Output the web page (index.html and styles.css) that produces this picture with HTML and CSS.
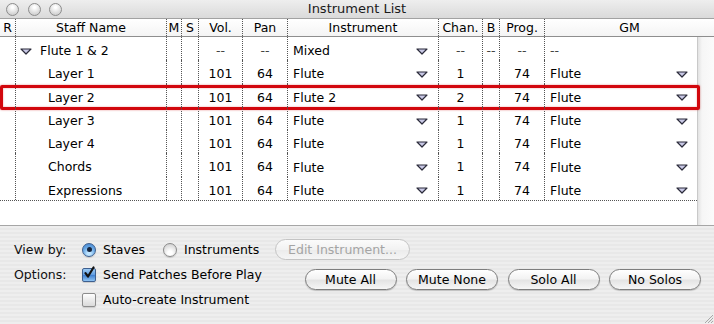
FILE: index.html
```html
<!DOCTYPE html>
<html lang="en">
<head>
    <meta charset="UTF-8">
    <meta name="viewport" content="width=device-width, initial-scale=1.0">
    <title>Instrument List</title>
    <link rel="stylesheet" href="styles.css">
</head>
<body>
<div class="window">
    <div class="titlebar">
        <div class="lights"><span class="light"></span><span class="light"></span><span class="light"></span></div>
        <div class="title">Instrument List</div>
        <div></div>
    </div>

    <div class="head">
        <div class="hc">R</div>
        <div class="hc">Staff Name</div>
        <div class="hc">M</div>
        <div class="hc">S</div>
        <div class="hc">Vol.</div>
        <div class="hc">Pan</div>
        <div class="hc">Instrument</div>
        <div class="hc">Chan.</div>
        <div class="hc">B</div>
        <div class="hc">Prog.</div>
        <div class="hc last">GM</div>
    </div>

    <div class="list">
        <div class="rows">
            <div class="row">
                <div class="c"></div>
                <div class="c name group"><svg class="tri" width="12" height="7" viewBox="0 0 12 7"><polygon points="1,1 11,1 6,6"/></svg>Flute 1 &amp; 2</div>
                <div class="c"></div><div class="c"></div>
                <div class="c num dash">--</div>
                <div class="c num dash">--</div>
                <div class="c pop"><span>Mixed</span><svg class="tri" width="12" height="7" viewBox="0 0 12 7"><polygon points="1,1 11,1 6,6"/></svg></div>
                <div class="c num dash">--</div>
                <div class="c num dash">--</div>
                <div class="c num dash">--</div>
                <div class="c gm dash">--</div>
            </div>
            <div class="row">
                <div class="c"></div>
                <div class="c name">Layer 1</div>
                <div class="c"></div><div class="c"></div>
                <div class="c num">101</div>
                <div class="c num">64</div>
                <div class="c pop"><span>Flute</span><svg class="tri" width="12" height="7" viewBox="0 0 12 7"><polygon points="1,1 11,1 6,6"/></svg></div>
                <div class="c num">1</div>
                <div class="c num"></div>
                <div class="c num">74</div>
                <div class="c gm pop"><span>Flute</span><svg class="tri" width="12" height="7" viewBox="0 0 12 7"><polygon points="1,1 11,1 6,6"/></svg></div>
            </div>
            <div class="row marked">
                <div class="c"></div>
                <div class="c name">Layer 2</div>
                <div class="c"></div><div class="c"></div>
                <div class="c num">101</div>
                <div class="c num">64</div>
                <div class="c pop"><span>Flute 2</span><svg class="tri" width="12" height="7" viewBox="0 0 12 7"><polygon points="1,1 11,1 6,6"/></svg></div>
                <div class="c num">2</div>
                <div class="c num"></div>
                <div class="c num">74</div>
                <div class="c gm pop"><span>Flute</span><svg class="tri" width="12" height="7" viewBox="0 0 12 7"><polygon points="1,1 11,1 6,6"/></svg></div>
            </div>
            <div class="row">
                <div class="c"></div>
                <div class="c name">Layer 3</div>
                <div class="c"></div><div class="c"></div>
                <div class="c num">101</div>
                <div class="c num">64</div>
                <div class="c pop"><span>Flute</span><svg class="tri" width="12" height="7" viewBox="0 0 12 7"><polygon points="1,1 11,1 6,6"/></svg></div>
                <div class="c num">1</div>
                <div class="c num"></div>
                <div class="c num">74</div>
                <div class="c gm pop"><span>Flute</span><svg class="tri" width="12" height="7" viewBox="0 0 12 7"><polygon points="1,1 11,1 6,6"/></svg></div>
            </div>
            <div class="row">
                <div class="c"></div>
                <div class="c name">Layer 4</div>
                <div class="c"></div><div class="c"></div>
                <div class="c num">101</div>
                <div class="c num">64</div>
                <div class="c pop"><span>Flute</span><svg class="tri" width="12" height="7" viewBox="0 0 12 7"><polygon points="1,1 11,1 6,6"/></svg></div>
                <div class="c num">1</div>
                <div class="c num"></div>
                <div class="c num">74</div>
                <div class="c gm pop"><span>Flute</span><svg class="tri" width="12" height="7" viewBox="0 0 12 7"><polygon points="1,1 11,1 6,6"/></svg></div>
            </div>
            <div class="row">
                <div class="c"></div>
                <div class="c name">Chords</div>
                <div class="c"></div><div class="c"></div>
                <div class="c num">101</div>
                <div class="c num">64</div>
                <div class="c pop"><span>Flute</span><svg class="tri" width="12" height="7" viewBox="0 0 12 7"><polygon points="1,1 11,1 6,6"/></svg></div>
                <div class="c num">1</div>
                <div class="c num"></div>
                <div class="c num">74</div>
                <div class="c gm pop"><span>Flute</span><svg class="tri" width="12" height="7" viewBox="0 0 12 7"><polygon points="1,1 11,1 6,6"/></svg></div>
            </div>
            <div class="row">
                <div class="c"></div>
                <div class="c name">Expressions</div>
                <div class="c"></div><div class="c"></div>
                <div class="c num">101</div>
                <div class="c num">64</div>
                <div class="c pop"><span>Flute</span><svg class="tri" width="12" height="7" viewBox="0 0 12 7"><polygon points="1,1 11,1 6,6"/></svg></div>
                <div class="c num">1</div>
                <div class="c num"></div>
                <div class="c num">74</div>
                <div class="c gm pop"><span>Flute</span><svg class="tri" width="12" height="7" viewBox="0 0 12 7"><polygon points="1,1 11,1 6,6"/></svg></div>
            </div>
        </div>
        <div class="scroll"></div>
    </div>

    <!-- options panel -->
    <div class="panel">
        <div class="line first">
            <div class="label">View by:</div>
            <div class="choice staves"><span class="radio on"></span>Staves</div>
            <div class="choice instr"><span class="radio"></span>Instruments</div>
            <div class="btn disabled edit">Edit Instrument...</div>
        </div>
        <div class="line second">
            <div class="opt">
                <div class="label">Options:</div>
                <div class="choice"><span class="check on"><svg width="14" height="14" viewBox="0 0 14 14"><path d="M3.5 7.2 L6 10.5 L11.5 1.5"/></svg></span>Send Patches Before Play</div>
            </div>
            <div class="btns">
                <div class="btn">Mute All</div>
                <div class="btn">Mute None</div>
                <div class="btn">Solo All</div>
                <div class="btn">No Solos</div>
            </div>
        </div>
        <div class="line third">
            <div class="choice"><span class="check"></span>Auto-create Instrument</div>
        </div>
        <svg class="grip" width="11" height="11" viewBox="0 0 11 11"><path d="M10 2 L2 10 M10 5 L5 10 M10 8 L8 10"/></svg>
    </div>
</div>
</body>
</html>
```

FILE: styles.css
```css
html, body{
    margin: 0;
    padding: 0;
}
body{
    width: 714px;
    height: 324px;
    overflow: hidden;
    font-family: "DejaVu Sans", "Liberation Sans", sans-serif;
    font-size: 12.5px;
    color: #000;
    background: #ececec;
}
.window{
    position: relative;
    width: 714px;
    height: 324px;
}

/* title bar */
.titlebar{
    display: grid;
    grid-template-columns: 1fr auto 1fr;
    align-items: center;
    height: 18px;
    border-bottom: 1px solid #a2a2a2;
    background: linear-gradient(#eeeeee, #dadada);
}
.lights{
    display: flex;
    gap: 8.5px;
    padding-left: 6px;
}
.light{
    width: 11px;
    height: 11px;
    border-radius: 50%;
    border: 1px solid #8c8c8c;
    background: radial-gradient(circle at 50% 30%, #ffffff 10%, #dcdcdc 60%, #c4c4c4);
}
.title{
    font-size: 13px;
    color: #1a1a1a;
    line-height: 18px;
}

/* header */
.head{
    display: grid;
    grid-template-columns: 16px 151px 15px 17px 44px 45px 151px 44px 17px 45px 169px;
    height: 18px;
    box-sizing: border-box;
    border-bottom: 1px solid #8e8e8e;
    background: linear-gradient(#ffffff, #f4f4f4);
}
.hc{
    text-align: center;
    line-height: 17px;
    border-right: 1px dotted #555;
}
.hc.last{
    border-right: none;
}

/* list body */
.list{
    display: flex;
    height: 189px;
    box-sizing: border-box;
    border-bottom: 1px solid #a6a6a6;
}
.rows{
    width: 697px;
    background: #fff;
}
.scroll{
    width: 17px;
    border-left: 1px solid #c9c9c9;
    background: linear-gradient(to right, #e2e2e2, #f6f6f6 4px, #fbfbfb);
}
.row{
    position: relative;
    display: grid;
    grid-template-columns: 16px 151px 15px 17px 44px 45px 151px 44px 17px 45px 152px;
    grid-template-rows: 23.3px;
    height: 23.3px;
}
.row:last-child{
    border-bottom: 1px dotted #555;
}
.c{
    box-sizing: border-box;
    border-right: 1px dotted #555;
    padding-top: 5px;
    line-height: 18px;
    white-space: nowrap;
}
.c.gm{
    border-right: none;
    padding-left: 5px;
}
.num{
    text-align: center;
}
.dash{
    color: #444;
}
.name{
    padding-left: 32px;
}
.name.group{
    display: flex;
    align-items: center;
    gap: 8px;
    padding-left: 4px;
}
.pop{
    display: flex;
    align-items: center;
    justify-content: space-between;
    padding-right: 10px;
    padding-left: 5px;
}
.c.gm.pop{
    padding-right: 9px;
}
.tri{
    flex: none;
}
.tri polygon{
    fill: #c9c9e6;
    stroke: #2b2b3a;
    stroke-width: 1.2;
    stroke-linejoin: round;
}
/* red annotation round the selected row */
.row.marked::after{
    content: '';
    position: absolute;
    left: 0;
    right: -3px;
    top: 1px;
    bottom: -3px;
    border: 3px solid #d2070d;
    border-radius: 2px;
    box-shadow: 0 0 2px rgba(210, 0, 0, 0.5), inset 0 0 2px rgba(210, 0, 0, 0.4);
    pointer-events: none;
}

/* options panel */
.panel{
    position: relative;
    height: 98px;
    box-sizing: border-box;
    padding: 13px 13px 0 14px;
    background: repeating-linear-gradient(#eeeeee 0px, #eeeeee 2px, #e8e8e8 2px, #e8e8e8 4px);
}
.line{
    display: flex;
}
.line.first{
    height: 21px;
    align-items: center;
}
.line.second{
    margin-top: 5px;
    align-items: flex-start;
}
.line.third{
    height: 19px;
    padding-left: 68px;
    align-items: center;
}
.opt{
    display: flex;
    align-items: center;
    height: 19px;
}
.label{
    width: 68px;
    color: #111;
}
.choice{
    display: flex;
    align-items: center;
    gap: 7px;
}
.choice.staves{
    width: 81px;
}
.choice.instr{
    width: 112px;
}
.radio{
    width: 12px;
    height: 12px;
    border-radius: 50%;
    border: 1px solid #8a8a8a;
    background: radial-gradient(circle at 50% 75%, #ffffff 20%, #e6e6e6 55%, #c8c8c8);
    box-shadow: 0 1px 1px rgba(0, 0, 0, 0.15);
}
.radio.on{
    position: relative;
    border-color: #3d5f8f;
    background: radial-gradient(circle at 50% 80%, #bfe4ff 15%, #6aa9e6 55%, #3f7ec8);
}
.radio.on::after{
    content: '';
    position: absolute;
    left: 3.5px;
    top: 3.5px;
    width: 5px;
    height: 5px;
    border-radius: 50%;
    background: #16243c;
}
.check{
    width: 12px;
    height: 12px;
    border-radius: 2px;
    border: 1px solid #8d8d8d;
    background: linear-gradient(#ffffff, #ebebeb 50%, #dadada);
    box-shadow: 0 1px 1px rgba(0, 0, 0, 0.15);
}
.check.on{
    position: relative;
    border-color: #3d5f8f;
    background: linear-gradient(#9ccaf4, #5e9be0 50%, #3f7fd0 51%, #8ec3f3);
}
.check.on svg{
    position: absolute;
    left: -1px;
    top: -3px;
}
.check.on path{
    fill: none;
    stroke: #111;
    stroke-width: 2.2;
    stroke-linecap: round;
    stroke-linejoin: round;
}
.btns{
    display: flex;
    gap: 9.5px;
    margin-left: auto;
    margin-top: 4px;
}
.btn{
    width: 92px;
    height: 21px;
    box-sizing: border-box;
    border: 1px solid #7d7d7d;
    border-radius: 11px;
    text-align: center;
    line-height: 19px;
    background: linear-gradient(#ffffff, #f3f3f3 45%, #e4e4e4 55%, #f6f6f6);
    box-shadow: 0 1px 1px rgba(0, 0, 0, 0.2);
}
.btn.edit{
    width: 135px;
}
.btn.disabled{
    color: #a4a4a4;
    border-color: #c4c4c4;
    background: linear-gradient(#fbfbfb, #f2f2f2 50%, #ececec 55%, #f5f5f5);
    box-shadow: none;
}
.grip{
    position: absolute;
    right: 0;
    bottom: 0;
}
.grip path{
    stroke: #a8a8a8;
    stroke-width: 1;
}
```
